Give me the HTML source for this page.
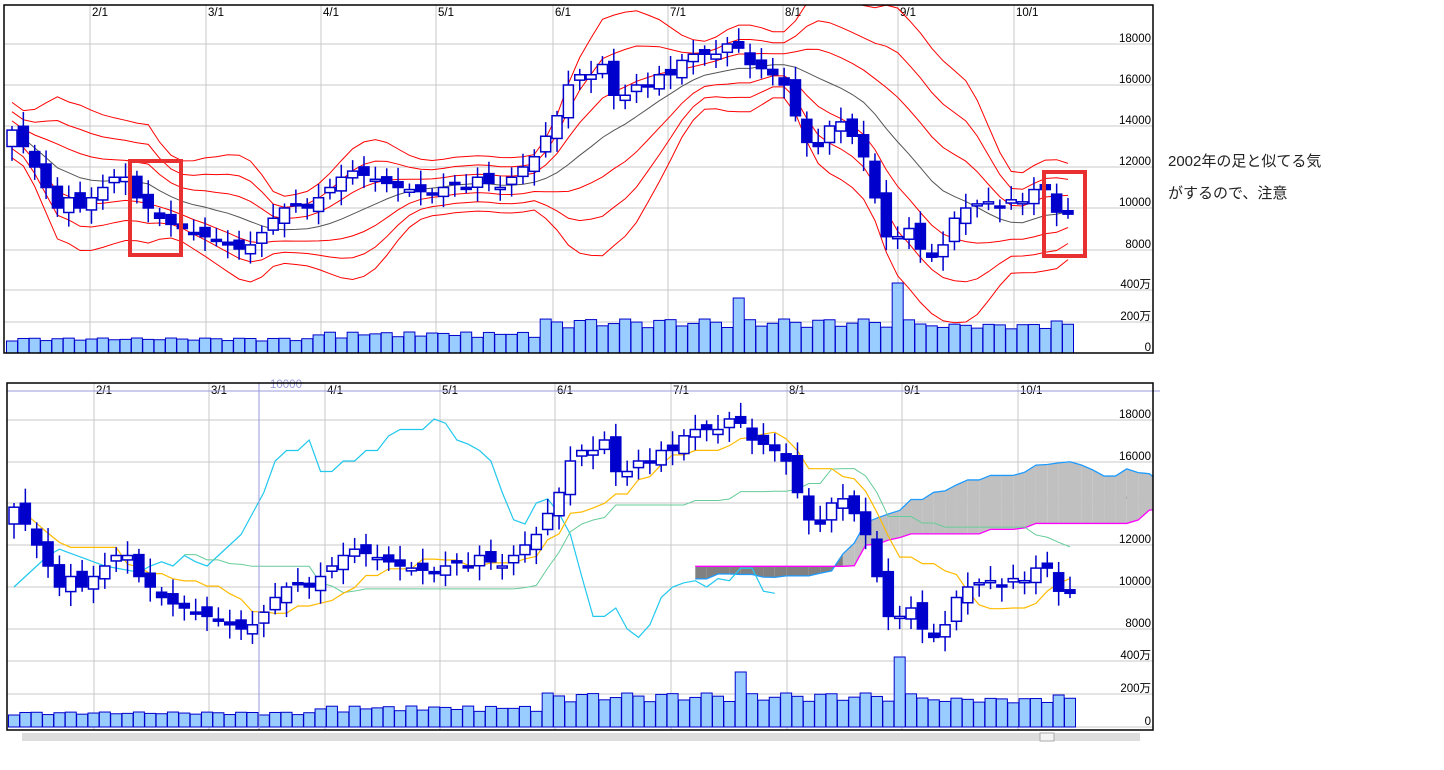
<!DOCTYPE html>
<html><head><meta charset="utf-8"><style>
html,body{margin:0;padding:0;background:#fff;width:1444px;height:770px;overflow:hidden}
svg{position:absolute;left:0;top:0}
text{font-family:"Liberation Sans","Noto Sans CJK JP",sans-serif}
.note{position:absolute;left:1168px;font:15px "Liberation Sans","Noto Sans CJK JP",sans-serif;color:#222}
</style></head><body>
<svg id="s" width="1444" height="770" xmlns="http://www.w3.org/2000/svg"></svg>
<div class="note" style="top:150px">2002年の足と似てる気</div>
<div class="note" style="top:182px">がするので、注意</div>
<script>
var C=[13800,13000,12000,11000,10000,10500,10000,
10500,11000,11500,11500,10500,10000,9500,9200,9000,8800,
8600,8400,8200,8000,8200,8800,9500,10000,10200,10000,
10500,11000,11500,11800,11600,11400,11200,11000,10900,10800,
10700,11000,11200,11000,11500,11200,11000,11500,12000,12500,
13500,14500,16000,16500,16500,17000,15500,15500,16000,16000,
16500,16500,17200,17500,17500,17500,18000,17800,17000,16800,
16500,16000,14500,13200,13000,14000,14200,13500,12500,10500,
8600,8600,9000,8000,7600,8200,9500,10000,10200,10300,
10000,10400,10300,10900,10900,9800,9700];
var N=C.length,O=[],H=[],L=[],V=[];
var SP=1056/(N-1);
for(var i=0;i<N;i++){var o=i?C[i-1]+Math.sin(i*2.3)*250:13000;O.push(o);var hi=Math.max(o,C[i])+200+Math.abs(Math.sin(i*1.7))*500,lo=Math.min(o,C[i])-200-Math.abs(Math.cos(i*1.3))*500;H.push(hi);L.push(lo);
var v=i<27?12+3*Math.abs(Math.sin(i)):(i<47?15+6*Math.abs(Math.sin(i*1.3)):24+10*Math.abs(Math.sin(i*0.9)));if(i==64)v=55;if(i==78)v=70;if(i>79)v=24+5*Math.abs(Math.sin(i));if(i==N-2)v=32;V.push(v);}
var sv='<defs><clipPath id="cb"><rect x="7" y="383" width="1146" height="347"/></clipPath><clipPath id="ct"><rect x="4" y="5" width="1149" height="348"/></clipPath></defs>';
function ln(x1,y1,x2,y2,c,w){sv+='<line x1="'+x1+'" y1="'+y1+'" x2="'+x2+'" y2="'+y2+'" stroke="'+c+'" stroke-width="'+(w||1)+'"/>';}
function tx(x,y,t,c,a){sv+='<text x="'+x+'" y="'+y+'" font-size="11.5" fill="'+(c||'#000')+'" text-anchor="'+(a||'start')+'">'+t+'</text>';}
function pl(pts,c,w){if(pts.length<2)return;sv+='<polyline fill="none" stroke="'+c+'" stroke-width="'+(w||1)+'" points="'+pts.join(' ')+'"/>';}
function chart(top,bot,x0,gx,gy){
 gy.forEach(function(g){ln(x0,g[0],1153,g[0],'#c8c8c8');tx(1151,g[0]-2,g[1],'#000','end');});
 gx.forEach(function(g,k){ln(g,top,g,bot,'#c8c8c8');tx(g+2,top+11,['2/1','3/1','4/1','5/1','6/1','7/1','8/1','9/1','10/1'][k]);});
}
function candles(X,Y){for(var i=0;i<N;i++){var x=X(i);ln(x,Y(H[i]),x,Y(L[i]),'#0000cc',1.5);var a=Y(Math.max(O[i],C[i])),b=Y(Math.min(O[i],C[i]));var h=Math.max(b-a,2);sv+='<rect x="'+(x-5)+'" y="'+a+'" width="10" height="'+h+'" fill="'+(C[i]<O[i]?'#0000cc':'#fff')+'" stroke="#0000cc" stroke-width="1.5"/>';}}
function vols(X,base,sc){for(var i=0;i<N;i++){var h=V[i]*sc;sv+='<rect x="'+(X(i)-5.5)+'" y="'+(base-h)+'" width="11" height="'+h+'" fill="#99ccff" stroke="#0000cc" stroke-width="1"/>';}}
// TOP
var X1=function(i){return 12+i*SP};var Y1=function(p){return 208-(p-10000)*41/2000};
chart(5,353,4,[90,206,321,436,553,668,783,898,1014],[[44,'18000'],[85,'16000'],[126,'14000'],[167,'12000'],[208,'10000'],[250,'8000'],[290,'400万'],[322,'200万'],[353,'0']]);
var band={};[-3,-2,-1,0,1,2,3].forEach(function(k){band[k]=[]});
for(i=0;i<N;i++){var s=0,n=0,q=0;for(var j=Math.max(0,i-12);j<=i;j++){s+=C[j];n++}var m=s/n;for(j=Math.max(0,i-12);j<=i;j++)q+=(C[j]-m)*(C[j]-m);var sd=Math.max(Math.sqrt(q/n)*0.85,450);
for(var k=-3;k<=3;k++)band[k].push(X1(i).toFixed(1)+','+Y1(m+k*sd).toFixed(1));}
sv+='<g clip-path="url(#ct)">';
pl(band[0],'#555');[-3,-2,-1,1,2,3].forEach(function(k){pl(band[k],'#ff0000')});
candles(X1,Y1);vols(X1,353,1);
sv+='</g>';
sv+='<rect x="4" y="5" width="1149" height="348" fill="none" stroke="#000" stroke-width="1.5"/>';
sv+='<rect x="130" y="161" width="51" height="94" fill="none" stroke="#e83030" stroke-width="4"/>';
sv+='<rect x="1044" y="172" width="41" height="84" fill="none" stroke="#e83030" stroke-width="4"/>';
// BOTTOM
var X2=function(i){return 14+i*SP};var Y2=function(p){return 587-(p-10000)*42/2000};
chart(383,730,7,[94,209,325,440,555,671,787,902,1018],[[420,'18000'],[462,'16000'],[503,'14000'],[545,'12000'],[587,'10000'],[629,'8000'],[661,'400万'],[694,'200万'],[727,'0']]);
function mid(i,n){var h=-1e9,l=1e9;for(var j=Math.max(0,i-n+1);j<=i;j++){h=Math.max(h,H[j]);l=Math.min(l,L[j]);}return (h+l)/2}
var tk=[],kj=[],A=[],B=[],ch=[];
for(i=0;i<N;i++){var t=mid(i,9),kk=mid(i,26);tk.push(X2(i)+','+Y2(t));kj.push([i,kk]);
A.push([i+26,(t+kk)/2]);B.push([i+26,mid(i,52)]);if(i>=26)ch.push(X2(i-26)+','+Y2(C[i]));}
sv+='<g clip-path="url(#cb)">';
for(i=34;i<N-1;i++){var a1=A[i],b1=B[i],a2=A[i+1],b2=B[i+1];var col=a1[1]>=b1[1]?'#c0c0c0':'#808080';
sv+='<polygon fill="'+col+'" points="'+X2(a1[0])+','+Y2(a1[1])+' '+X2(a2[0])+','+Y2(a2[1])+' '+X2(b2[0])+','+Y2(b2[1])+' '+X2(b1[0])+','+Y2(b1[1])+'"/>';}
pl(A.slice(34).map(function(p){return X2(p[0])+','+Y2(p[1])}),'#1e9bff',1.3);
pl(B.slice(34).map(function(p){return X2(p[0])+','+Y2(p[1])}),'#ff00ff',1.3);
pl(ch,'#22c8ee',1.2);
pl(kj.slice(15).map(function(p){return X2(p[0])+','+Y2(p[1])}),'#66cc99',1);
pl(tk,'#ffbb00',1.2);
candles(X2,Y2);vols(X2,727,1);
sv+='</g>';
ln(7,391,1160,391,'#9999dd');ln(259,383,259,730,'#9999dd');tx(270,388,'10000','#9999dd');
sv+='<rect x="7" y="383" width="1146" height="347" fill="none" stroke="#000" stroke-width="1.5"/>';
sv+='<rect x="22" y="733" width="1118" height="8" fill="#ddd"/><rect x="1040" y="733" width="14" height="8" fill="#f4f4f4" stroke="#aaa"/>';
document.getElementById('s').innerHTML=sv;
</script>
</body></html>
